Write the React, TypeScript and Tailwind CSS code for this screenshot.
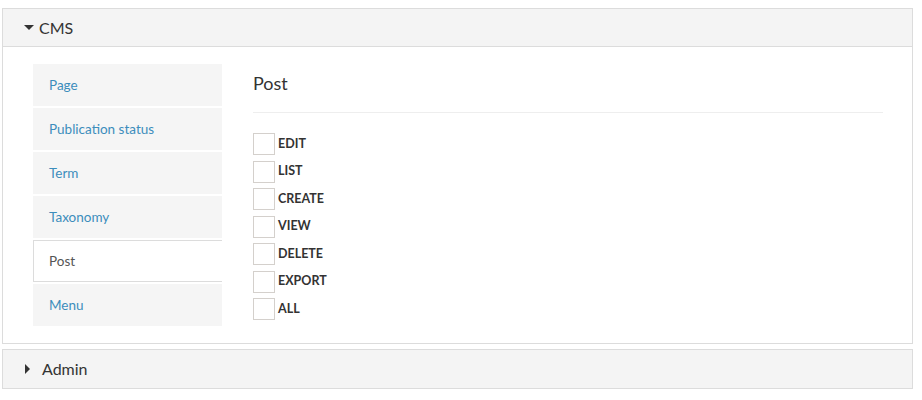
import React from 'react';

const navItems = ['Page', 'Publication status', 'Term', 'Taxonomy', 'Post', 'Menu'];
const perms = ['EDIT', 'LIST', 'CREATE', 'VIEW', 'DELETE', 'EXPORT', 'ALL'];

const CaretDown = () => (
  <svg width="10" height="5" viewBox="0 0 10 5" className="shrink-0">
    <path d="M0 0 L10 0 L5 5 Z" fill="#333" />
  </svg>
);

const CaretRight = () => (
  <svg width="5" height="10" viewBox="0 0 5 10" className="shrink-0">
    <path d="M0 0 L5 5 L0 10 Z" fill="#333" />
  </svg>
);

const App = () => {
  const active = 'Post';
  return (
    <div className="w-[922px] h-[400px] bg-white pt-2 pl-[2px] font-['Lato','Liberation_Sans',sans-serif] text-[#333]">
      <div className="w-[911px]">
        {/* CMS panel */}
        <div className="border border-[#dcdcdc] bg-white">
          <div className="h-[38px] bg-[#f4f4f4] border-b border-[#dcdcdc] flex items-center pl-[21px] gap-[5px]">
            <CaretDown />
            <span className="text-[16px]">CMS</span>
          </div>
          <div className="flex pt-[17px] pb-[17px] pl-[30px] pr-[29px]">
            {/* Nav */}
            <div className="w-[189px] flex flex-col gap-[2px] shrink-0">
              {navItems.map((name) =>
                name === active ? (
                  <div
                    key={name}
                    className="h-[42px] flex items-center pl-[15px] bg-white border-t border-l border-b border-[#dcdcdc] text-[13.5px] text-[#555]"
                  >
                    {name}
                  </div>
                ) : (
                  <div
                    key={name}
                    className="h-[42px] flex items-center pl-[16px] bg-[#f5f5f5] text-[13.5px] text-[#3c8dbc]"
                  >
                    {name}
                  </div>
                )
              )}
            </div>

            {/* Content */}
            <div className="flex-1 pl-[31px]">
              <div className="h-[38px] flex items-center text-[18px] text-[#333]">Post</div>
              <div className="mt-[10px] border-t border-[#eee]" />
              <div className="mt-[20px] flex flex-col">
                {perms.map((p) => (
                  <div key={p} className="h-[27.5px] flex items-start gap-[3px]">
                    <span className="w-[22px] h-[22px] border border-[#d4d0cc] bg-white" />
                    <span className="h-[22px] flex items-center text-[12.5px] font-bold text-[#333]">{p}</span>
                  </div>
                ))}
              </div>
            </div>
          </div>
        </div>

        {/* Admin panel */}
        <div className="mt-[5px] h-[40px] border border-[#dcdcdc] bg-[#f4f4f4] flex items-center pl-[22px] gap-[12px]">
          <CaretRight />
          <span className="text-[16px]">Admin</span>
        </div>
      </div>
    </div>
  );
};

export default App;
